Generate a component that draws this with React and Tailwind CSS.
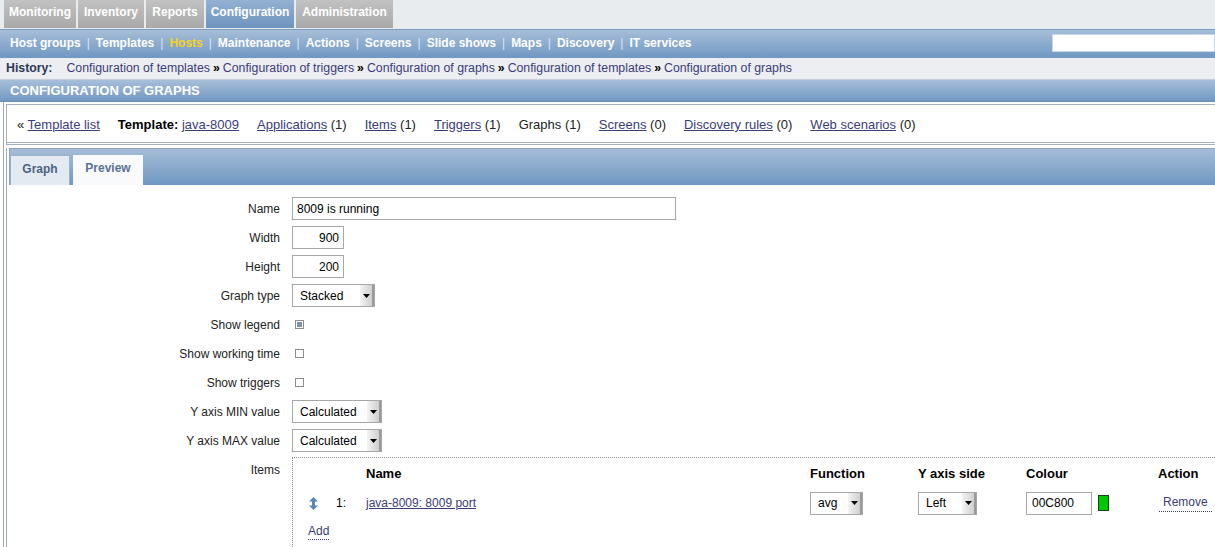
import React from "react";

const topTabs = [
  { label: "Monitoring", w: "w-[72px]" },
  { label: "Inventory", w: "w-[66px]" },
  { label: "Reports", w: "w-[58px]" },
  { label: "Configuration", w: "w-[88px]", active: true },
  { label: "Administration", w: "w-[97px]" },
];

const subItems = [
  "Host groups",
  "Templates",
  "Hosts",
  "Maintenance",
  "Actions",
  "Screens",
  "Slide shows",
  "Maps",
  "Discovery",
  "IT services",
];

const history = [
  "Configuration of templates",
  "Configuration of triggers",
  "Configuration of graphs",
  "Configuration of templates",
  "Configuration of graphs",
];

function Select({ value, width }) {
  return (
    <div
      className={`${width} h-[23px] flex items-center justify-between bg-white border border-[#a7a7a7] pl-[7px] text-[12px] text-black`}
    >
      <span>{value}</span>
      <span className="h-full w-[14px] flex items-center justify-center bg-gradient-to-r from-[#f4f4f4] to-[#cfcfcf] border-r-2 border-[#9a9a9a]">
        <svg width="7" height="4" viewBox="0 0 7 4">
          <path d="M0 0h7L3.5 4z" fill="#000" />
        </svg>
      </span>
    </div>
  );
}

function Checkbox({ checked }) {
  return (
    <div className="w-[9px] h-[9px] ml-[3px] border border-[#8e8e8e] bg-white flex items-center justify-center">
      {checked && <div className="w-[5px] h-[5px] bg-[#7c93b0]" />}
    </div>
  );
}

function Row({ label, children }) {
  return (
    <div className="flex h-[29px] items-center">
      <div className="w-[277px] text-right pr-[5px] text-[#222]">{label}</div>
      <div className="pl-[7px] flex items-center">{children}</div>
    </div>
  );
}

export default function App() {
  return (
    <div className="w-[1215px] h-[547px] overflow-hidden bg-white text-[12px] font-['Liberation_Sans',Arial,sans-serif] leading-none">
      {/* top menu */}
      <div className="flex h-[29px] bg-[#e9ecee] pl-[4px] gap-[2px]">
        {topTabs.map((t) => (
          <div
            key={t.label}
            className={`${t.w} h-[28px] pb-[4px] flex items-center justify-center font-bold text-white ${
              t.active
                ? "bg-gradient-to-b from-[#93b1d2] to-[#6e94bf]"
                : "bg-gradient-to-b from-[#c2c2c2] to-[#a9a9a9]"
            }`}
          >
            {t.label}
          </div>
        ))}
      </div>

      {/* sub menu */}
      <div className="h-[29px] flex items-center justify-between bg-gradient-to-b from-[#a7bed8] to-[#7097c2] border-t border-[#7d9cc0]">
        <div className="flex items-center pl-[10px] pb-[2px] font-bold">
          {subItems.map((s, i) => (
            <React.Fragment key={s}>
              {i > 0 && (
                <span className="mx-[6px] text-[#dbe5f0] font-normal">|</span>
              )}
              <span className={s === "Hosts" ? "text-[#f5d224]" : "text-white"}>
                {s}
              </span>
            </React.Fragment>
          ))}
        </div>
        <input
          className="w-[163px] h-[18px] mb-[2px] bg-white border border-[#c9d5e3] outline-none"
          defaultValue=""
        />
      </div>

      {/* history */}
      <div className="h-[22px] flex items-center bg-[#eceef1] pl-[6px] pb-[1px] border-b border-[#c5ced9] text-[12.3px]">
        <span className="font-bold text-[#2e3a5a] mr-[14px]">History:</span>
        {history.map((h, i) => (
          <React.Fragment key={i}>
            {i > 0 && <span className="mx-[3px] font-bold text-black">»</span>}
            <span className="text-[#3b3d78]">{h}</span>
          </React.Fragment>
        ))}
      </div>

      {/* page header */}
      <div className="h-[22px] flex items-center bg-gradient-to-b from-[#a8bfd9] to-[#7298c2] border-b border-[#6c8fb8] pl-[10px] font-bold text-white text-[13px]">
        CONFIGURATION OF GRAPHS
      </div>

      {/* body */}
      <div className="ml-[3px] border-l border-[#9ba7b6] pl-[2px] pt-[2px]">
        <div className="border-l border-t border-b-[3px] border-double border-[#a4b1c1] h-[41px] flex items-center pl-[10px] pt-[2px] gap-[18px] text-[13px] text-[#222]">
          <span>
            « <span className="text-[#3b3d78] underline">Template list</span>
          </span>
          <span>
            <b className="text-black">Template:</b>{" "}
            <span className="text-[#3b3d78] underline">java-8009</span>
          </span>
          <span>
            <span className="text-[#3b3d78] underline">Applications</span> (1)
          </span>
          <span>
            <span className="text-[#3b3d78] underline">Items</span> (1)
          </span>
          <span>
            <span className="text-[#3b3d78] underline">Triggers</span> (1)
          </span>
          <span>Graphs (1)</span>
          <span>
            <span className="text-[#3b3d78] underline">Screens</span> (0)
          </span>
          <span>
            <span className="text-[#3b3d78] underline">Discovery rules</span> (0)
          </span>
          <span>
            <span className="text-[#3b3d78] underline">Web scenarios</span> (0)
          </span>
        </div>

        <div className="border-l border-[#9ba7b6] mt-[3px]">
          {/* tab strip */}
          <div className="ml-[2px] h-[37px] flex items-end gap-[3px] bg-gradient-to-b from-[#a6bdd7] to-[#7097c2] border-t border-[#8aa3c0] border-l border-[#8aa3c0]">
            <div className="w-[60px] h-[30px] flex items-center justify-center pb-[4px] bg-[#e4eaf1] border border-b-0 border-[#9eb2c9] font-bold text-[#4a6283]">
              Graph
            </div>
            <div className="w-[70px] h-[30px] flex items-center justify-center pb-[4px] bg-[#f8fafc] font-bold text-[#5a7394]">
              Preview
            </div>
          </div>

          {/* form */}
          <div className="pt-[9px] pl-[1px]">
            <Row label="Name">
              <input
                className="w-[384px] h-[23px] border border-[#a7a7a7] px-[4px] text-[12px] text-black outline-none"
                defaultValue="8009 is running"
              />
            </Row>
            <Row label="Width">
              <input
                className="w-[52px] h-[23px] border border-[#a7a7a7] px-[4px] text-right text-[12px] text-black outline-none"
                defaultValue="900"
              />
            </Row>
            <Row label="Height">
              <input
                className="w-[52px] h-[23px] border border-[#a7a7a7] px-[4px] text-right text-[12px] text-black outline-none"
                defaultValue="200"
              />
            </Row>
            <Row label="Graph type">
              <Select value="Stacked" width="w-[83px]" />
            </Row>
            <Row label="Show legend">
              <Checkbox checked />
            </Row>
            <Row label="Show working time">
              <Checkbox />
            </Row>
            <Row label="Show triggers">
              <Checkbox />
            </Row>
            <Row label="Y axis MIN value">
              <Select value="Calculated" width="w-[90px]" />
            </Row>
            <Row label="Y axis MAX value">
              <Select value="Calculated" width="w-[90px]" />
            </Row>

            <div className="flex mt-[2px]">
              <div className="w-[277px] text-right pr-[5px] pt-[7px] text-[#222]">
                Items
              </div>
              <div className="ml-[7px] flex-1 border-t border-l border-dotted border-[#8a8a8a] h-[100px] pl-[16px] pt-[8px]">
                <div className="grid grid-cols-[27px_30px_444px_108px_108px_132px_1fr] items-center">
                  <div className="h-[15px]" />
                  <div />
                  <div className="font-bold text-[13px] text-black">Name</div>
                  <div className="font-bold text-[13px] text-black">Function</div>
                  <div className="font-bold text-[13px] text-black">Y axis side</div>
                  <div className="font-bold text-[13px] text-black">Colour</div>
                  <div className="font-bold text-[13px] text-black">Action</div>

                  <div className="h-[44px] flex items-center">
                    <svg width="9" height="13" viewBox="0 0 9 13">
                      <path d="M4.5 0L9 4.5H6v4h3L4.5 13 0 8.5h3v-4H0z" fill="#5b87b5" />
                    </svg>
                  </div>
                  <div className="text-black">1:</div>
                  <div>
                    <span className="text-[#3b3d78] underline">java-8009: 8009 port</span>
                  </div>
                  <div>
                    <Select value="avg" width="w-[53px]" />
                  </div>
                  <div>
                    <Select value="Left" width="w-[59px]" />
                  </div>
                  <div className="flex items-center gap-[6px]">
                    <input
                      className="w-[66px] h-[23px] border border-[#a7a7a7] px-[5px] text-[12px] text-black outline-none"
                      defaultValue="00C800"
                    />
                    <div className="w-[11px] h-[16px] bg-[#00c800] border border-[#1d3d1d]" />
                  </div>
                  <div>
                    <span className="inline-block ml-[1px] px-[4px] pt-[2px] pb-[3px] border-b border-dotted border-[#3b3d78] text-[#3b3d78]">
                      Remove
                    </span>
                  </div>
                </div>
                <div className="-ml-[1px]">
                  <span className="inline-block pb-[2px] border-b border-dotted border-[#3b3d78] text-[#3b3d78]">
                    Add
                  </span>
                </div>
              </div>
            </div>
          </div>
        </div>
      </div>
    </div>
  );
}
